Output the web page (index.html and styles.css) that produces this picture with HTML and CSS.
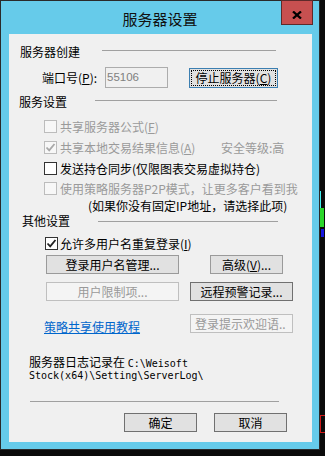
FILE: index.html
```html
<!DOCTYPE html>
<html>
<head>
<meta charset="utf-8">
<title>服务器设置</title>
<link rel="stylesheet" href="styles.css">
</head>
<body>
<div class="desk">
  <div class="window">
    <div class="titlebar"><span class="title">服务器设置</span></div>
    <div class="close">
      <svg width="10" height="8" viewBox="0 0 10 8"><path d="M1 0.5 L9 7.5 M9 0.5 L1 7.5" stroke="#000" stroke-width="2.3" fill="none"/></svg>
    </div>
    <div class="client">
      <div class="ghead g1"><span class="glabel">服务器创建</span><span class="gline"></span></div>
      <div class="row port">
        <span class="plabel">端口号(<u>P</u>):</span>
        <div class="input">55106</div>
        <div class="btn focus btn-stop">停止服务器(<u>C</u>)</div>
      </div>

      <div class="ghead g2"><span class="glabel">服务设置</span><span class="gline"></span></div>
      <div class="chk c1">
        <span class="box dis"></span><span class="ctext dis">共享服务器公式(<u>F</u>)</span>
      </div>
      <div class="chk c2">
        <span class="box dis"><svg width="11" height="11" viewBox="0 0 11 11"><path d="M1.5 5.5 L4.2 8.3 L9.5 2" stroke="#a8a8a8" stroke-width="1.8" fill="none"/></svg></span>
        <span class="ctext dis wide">共享本地交易结果信息(<u>A</u>)</span>
        <span class="ctext dis">安全等级:高</span>
      </div>
      <div class="chk c3">
        <span class="box"></span><span class="ctext">发送持仓同步(仅限图表交易虚拟持仓)</span>
      </div>
      <div class="chk c4">
        <span class="box dis"></span><span class="ctext dis">使用策略服务器P2P模式，让更多客户看到我</span>
      </div>
      <div class="note">(如果你没有固定IP地址，请选择此项)</div>

      <div class="ghead g3"><span class="glabel">其他设置</span><span class="gline"></span></div>
      <div class="chk c5">
        <span class="box"><svg width="11" height="11" viewBox="0 0 11 11"><path d="M1.5 5.5 L4.2 8.3 L9.5 2" stroke="#222" stroke-width="1.8" fill="none"/></svg></span>
        <span class="ctext">允许多用户名重复登录(<u>I</u>)</span>
      </div>
      <div class="row brow1">
        <div class="btn b-users">登录用户名管理...</div>
        <div class="btn b-adv">高级(<u>V</u>)...</div>
      </div>
      <div class="row brow2">
        <div class="btn dis b-users">用户限制项...</div>
        <div class="btn dark b-remote">远程预警记录...</div>
      </div>
      <div class="row brow3">
        <div class="linkcell"><span class="link">策略共享使用教程</span></div>
        <div class="btn dis b-welcome">登录提示欢迎语..</div>
      </div>

      <div class="log">
        <div class="logline">服务器日志记录在 <span class="mono">C:\Weisoft</span></div>
        <div class="logline"><span class="mono">Stock(x64)\Setting\ServerLog\</span></div>
      </div>

      <div class="sep"></div>
      <div class="row okrow">
        <div class="btn dark b-ok">确定</div>
        <div class="btn dark b-cancel">取消</div>
      </div>
    </div>
  </div>
  <div class="art a-cyan"></div>
  <div class="art a-green"></div>
  <div class="art a-blue"></div>
  <div class="art a-red"></div>
</div>
</body>
</html>
```
FILE: styles.css
```css
html, body {
  margin: 0;
  padding: 0;
}
body {
  background: #0b0b0b;
  width: 325px;
  height: 456px;
  overflow: hidden;
  font-family: "Noto Sans CJK SC", "Noto Sans CJK JP", sans-serif;
  font-size: 12px;
  color: #000;
}
.desk {
  position: relative;
  width: 325px;
  height: 456px;
}
.window {
  position: relative;
  width: 320px;
  height: 450px;
  box-sizing: border-box;
  border: 1px solid #2a2a2a;
  background: #66cbea;
  padding: 0 7px 7px 8px;
  display: flex;
  flex-direction: column;
}
.titlebar {
  height: 33px;
  margin: 0 -7px 0 -8px;
  text-align: center;
  flex: none;
}
.title {
  display: block;
  padding-top: 10px;
  font-size: 15px;
  line-height: 16px;
  color: #111;
}
.close {
  position: absolute;
  left: 280px;
  top: -1px;
  width: 32px;
  height: 25px;
  box-sizing: border-box;
  background: #c75050;
  border: 1px solid #5e2a2a;
  display: flex;
  justify-content: center;
  align-items: flex-start;
  padding-top: 10px;
}
.close svg { display: block; }
.client {
  flex: 1;
  background: #f0f0f0;
  display: flex;
  flex-direction: column;
}
u { text-decoration: underline; text-underline-offset: 1px; }

/* group headers */
.ghead {
  display: flex;
  height: 12px;
  line-height: 12px;
  flex: none;
}
.glabel { flex: none; white-space: nowrap; }
.gline {
  flex: none;
  height: 1px;
  background: #a0a0a0;
}
.g1 { margin-top: 12px; padding-left: 11px; }
.g1 .glabel { width: 82px; }
.g1 .gline { width: 174px; margin-top: 4px; }
.g2 { margin-top: 8px; padding-left: 10px; }
.g2 .glabel { width: 76px; }
.g2 .gline { width: 182px; margin-top: 4px; }
.g3 { margin-top: 3px; padding-left: 13px; }
.g3 .glabel { width: 76px; }
.g3 .gline { width: 180px; margin-top: 6px; }

.row { display: flex; flex: none; }

/* port row */
.port { margin-top: 9px; height: 21px; align-items: center; }
.plabel { margin-left: 33px; width: 63px; white-space: nowrap; }
.input {
  width: 63px;
  height: 21px;
  box-sizing: border-box;
  border: 1px solid #acacac;
  background: #f0f0f0;
  color: #7f7f7f;
  font-family: "Liberation Sans", Arial, sans-serif;
  font-size: 11.5px;
  line-height: 19px;
  padding-left: 1px;
}

/* buttons */
.btn {
  box-sizing: border-box;
  height: 19px;
  border: 1px solid #9a9a9a;
  background: #e1e1e1;
  text-align: center;
  line-height: 17px;
  white-space: nowrap;
  overflow: hidden;
  flex: none;
}
.btn.dark { border-color: #707070; }
.btn.dis { background: #f4f4f4; border-color: #bfbfbf; color: #999; }
.btn.focus {
  border-color: #3c7fb1;
  outline: 1px dotted #000;
  outline-offset: -3px;
}
.btn-stop { margin-left: 21px; width: 89px; height: 20px; line-height: 18px; }

/* checkbox rows */
.chk { display: flex; align-items: flex-start; padding-left: 35px; flex: none; }
.box {
  flex: none;
  width: 13px;
  height: 13px;
  box-sizing: border-box;
  margin-top: 3px;
  border: 1px solid #333;
  background: #fff;
  display: flex;
  align-items: center;
  justify-content: center;
}
.box.dis { border-color: #bcbcbc; background: #f7f7f7; }
.box svg { display: block; }
.ctext {
  margin-left: 3px;
  margin-top: 3px;
  line-height: 13px;
  white-space: nowrap;
}
.ctext.dis { color: #9a9a9a; }
.ctext.wide { width: 158px; flex: none; }
.c1 { margin-top: 9px; height: 21px; }
.c2 { height: 21px; }
.c3 { height: 20px; }
.c4 { height: 20px; }
.note { flex: none; height: 13px; line-height: 13px; padding-left: 79px; white-space: nowrap; }
.c5 { margin-top: 7px; height: 20px; padding-left: 36px; }
.c5 .ctext { margin-left: 2px; }

.brow1 { margin-top: 1px; height: 19px; }
.brow2 { margin-top: 8px; height: 19px; }
.brow3 { margin-top: 13px; height: 19px; }
.b-users { margin-left: 37px; width: 133px; }
.b-adv { margin-left: 31px; width: 73px; }
.b-remote { margin-left: 11px; width: 103px; }
.b-welcome { width: 103px; text-align: left; padding-left: 4px; }
.linkcell {
  width: 181px;
  box-sizing: border-box;
  padding-left: 35px;
  align-self: flex-end;
  line-height: 13px;
  flex: none;
}
.link { color: #0066cc; text-decoration: underline; white-space: nowrap; }

.log { margin-top: 23px; padding-left: 20px; flex: none; }
.logline { height: 12px; line-height: 12px; white-space: nowrap; }
.mono { font-family: "DejaVu Sans Mono", "Liberation Mono", monospace; font-size: 10px; }

.sep { flex: none; margin-top: 21px; margin-left: 21px; width: 249px; height: 1px; background: #a0a0a0; }
.okrow { margin-top: 11px; height: 19px; }
.b-ok { margin-left: 115px; width: 73px; }
.b-cancel { margin-left: 17px; width: 73px; }

/* desktop artifacts behind the window */
.art { position: absolute; }
.a-cyan { left: 320px; top: 191px; width: 1px; height: 26px; background: #3ff0f0; }
.a-green { left: 320px; top: 208px; width: 4px; height: 19px; background: #2ad62a; }
.a-blue { left: 321px; top: 229px; width: 3px; height: 8px; background: #1515e0; }
.a-red { left: 320px; top: 415px; width: 6px; height: 18px; box-sizing: border-box; border: 1px solid #d01818; border-right: none; }
```
